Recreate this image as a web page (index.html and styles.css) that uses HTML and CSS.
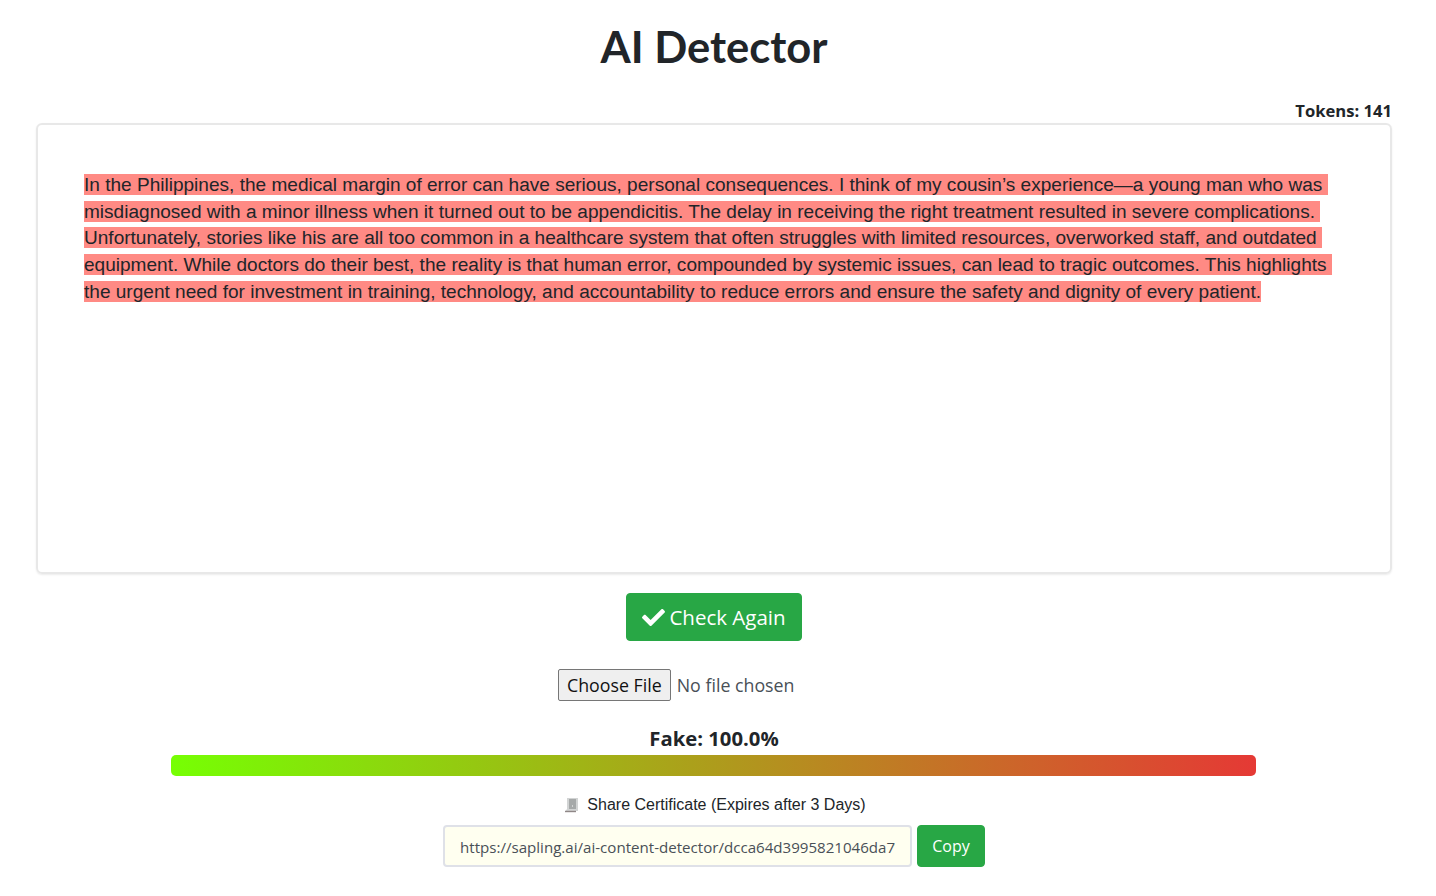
FILE: index.html

```html
<!DOCTYPE html>
<html lang="en">
<head>
    <meta charset="UTF-8">
    <meta name="viewport" content="width=device-width, initial-scale=1.0">
    <title>AI Detector</title>
    <link rel="stylesheet" href="styles.css">
</head>
<body>
    <h1 class="title">AI Detector</h1>
    <div class="tokens">Tokens: 141</div>
    <div class="editor"><span class="fake">In the Philippines, the medical margin of error can have serious, personal consequences. I think of my cousin’s experience—a young man who was misdiagnosed with a minor illness when it turned out to be appendicitis. The delay in receiving the right treatment resulted in severe complications. Unfortunately, stories like his are all too common in a healthcare system that often struggles with limited resources, overworked staff, and outdated equipment. While doctors do their best, the reality is that human error, compounded by systemic issues, can lead to tragic outcomes. This highlights the urgent need for investment in training, technology, and accountability to reduce errors and ensure the safety and dignity of every patient.</span></div>
    <div class="actions">
        <button class="btn check-btn">
            <svg class="check-icon" viewBox="0 0 512 512"><path d="M173.898 439.404l-166.4-166.4c-9.997-9.997-9.997-26.206 0-36.204l36.203-36.204c9.997-9.998 26.207-9.998 36.204 0L192 312.69 432.095 72.596c9.997-9.997 26.207-9.997 36.204 0l36.203 36.204c9.997 9.997 9.997 26.206 0 36.204l-294.4 294.401c-9.998 9.997-26.207 9.997-36.204-.001z"/></svg>
            Check Again
        </button>
    </div>
    <div class="upload">
        <input type="file" class="file-input">
    </div>
    <div class="score">Fake: 100.0%</div>
    <div class="bar"></div>
    <div class="share-label">
        <svg class="receipt-icon" viewBox="0 0 16 16">
            <path d="M3 1h11v13H1.500l1.500-2z" fill="#d2d4d4"/>
            <path d="M5 3h7M5 5h7M5 7h7M5 9h3M9 9h3M5 11h7" stroke="#7b7f7f" stroke-width="1"/>
            <path d="M1 14.500h11" stroke="#8f8787" stroke-width="1.400"/>
        </svg>
        <span>Share Certificate (Expires after 3 Days)</span>
    </div>
    <div class="share-row">
        <input class="share-url" type="text" readonly value="https://sapling.ai/ai-content-detector/dcca64d3995821046da7f0c8b2e14a96">
        <button class="btn copy-btn">Copy</button>
    </div>
</body>
</html>
```

FILE: styles.css

```css
html, body {
    margin: 0;
    padding: 0;
}
body {
    box-sizing: border-box;
    padding-right: 8px;
    font-family: "Open Sans", "Noto Sans", sans-serif;
    color: #212529;
    background-color: #fff;
    height: 896px;
    overflow: hidden;
}
.title {
    margin: 0;
    padding-top: 18px;
    height: 70px;
    line-height: 57px;
    font-family: Lato, sans-serif;
    font-size: 43.5px;
    font-weight: 700;
    text-align: center;
}
.tokens {
    margin: 0 36px 0 0;
    padding-top: 12px;
    height: 23px;
    line-height: 22px;
    font-size: 16.6px;
    font-weight: 700;
    text-align: right;
}
.editor {
    box-sizing: border-box;
    margin: 0 36px;
    height: 451px;
    padding: 47px 46px 0;
    border: 2px solid #e8e8e8;
    border-radius: 6px;
    box-shadow: 0 1px 2px rgba(0, 0, 0, 0.08);
    font-family: "Liberation Sans", Arial, sans-serif;
    font-size: 19.06px;
    line-height: 26.67px;
    white-space: pre-wrap;
}
.fake {
    background-color: #ff8a84;
}
.actions {
    display: flex;
    justify-content: center;
    margin-top: 19px;
}
.btn {
    border: 1px solid #28a745;
    border-radius: 4px;
    background-color: #28a745;
    color: #fff;
    font-family: "Open Sans", sans-serif;
    cursor: pointer;
}
.check-btn {
    display: flex;
    align-items: center;
    gap: 4px;
    box-sizing: border-box;
    width: 176px;
    height: 48px;
    justify-content: center;
    font-size: 20.5px;
    padding: 0;
}
.check-icon {
    width: 23px;
    height: 23px;
    fill: #fff;
}
.upload {
    display: flex;
    justify-content: center;
    margin-top: 28px;
    height: 33px;
}
.file-input {
    width: 312px;
    font-family: "Open Sans", sans-serif;
    font-size: 17.8px;
    color: #495057;
}
.file-input::file-selector-button {
    font: inherit;
    color: #111;
    height: 32px;
    padding: 0 8px;
    margin-right: 6px;
    background-color: #efefef;
    border: 1px solid #767676;
    border-radius: 2px;
}
.score {
    margin-top: 21px;
    height: 32px;
    line-height: 30px;
    font-size: 20.3px;
    font-weight: 700;
    text-align: center;
}
.bar {
    margin: 0 172px 0 171px;
    height: 21px;
    border-radius: 5px;
    background: linear-gradient(to right, #76ff03, #e53935);
}
.share-label {
    display: flex;
    justify-content: center;
    align-items: center;
    gap: 7px;
    margin-top: 18px;
    padding-left: 2px;
    height: 22px;
    font-family: "Liberation Sans", Arial, sans-serif;
    font-size: 16px;
}
.receipt-icon {
    width: 16px;
    height: 16px;
}
.share-row {
    display: flex;
    justify-content: center;
    gap: 5px;
    margin-top: 9px;
}
.share-url {
    box-sizing: border-box;
    width: 469px;
    height: 42px;
    padding: 1px 15px 0;
    border: 2px solid #dfe1e8;
    border-radius: 4px;
    background-color: #fffff0;
    color: #495057;
    font-family: "Open Sans", sans-serif;
    font-size: 15.1px;
    outline: none;
}
.copy-btn {
    box-sizing: border-box;
    width: 68px;
    height: 42px;
    padding: 0;
    font-size: 16px;
}
```
